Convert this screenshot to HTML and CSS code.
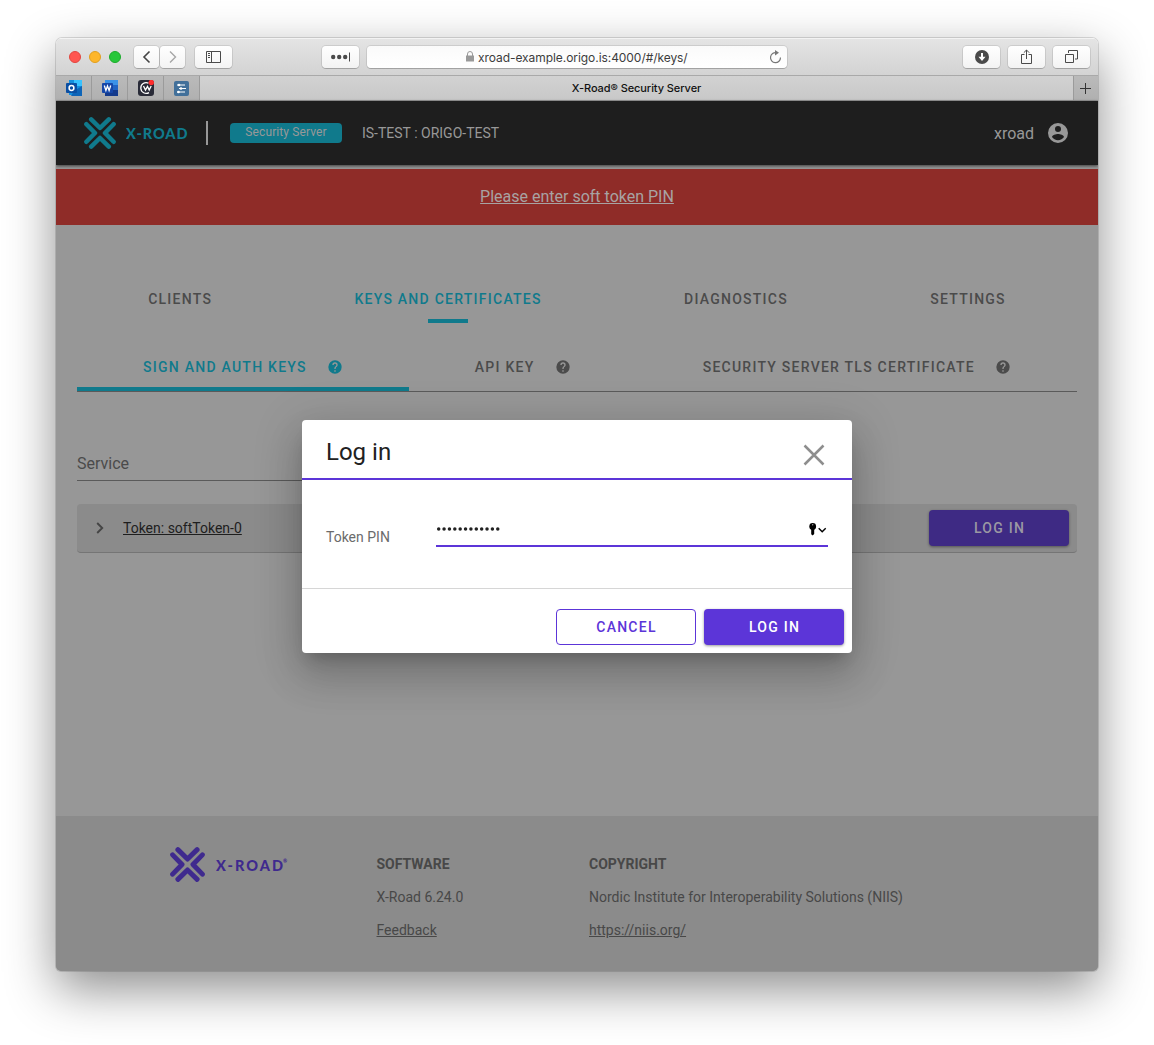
FILE: index.html
```html
<!DOCTYPE html>
<html lang="en">
<head>
<meta charset="utf-8">
<title>X-Road® Security Server</title>
<link rel="stylesheet" href="styles.css">
</head>
<body>
<svg class="defs" width="0" height="0">
  <symbol id="mark" viewBox="0 0 32 32"><path d="M7.2 2.4 16 11 24.8 2.4M7.2 29.6 16 21 24.8 29.6M2.4 7.2 11 16 2.4 24.8M29.6 7.2 21 16 29.6 24.8" fill="none" stroke="currentColor" stroke-width="4.5" stroke-linecap="round" stroke-linejoin="round"/></symbol>
  <symbol id="help" viewBox="0 0 24 24"><path fill="currentColor" d="M15.07,11.25L14.17,12.17C13.45,12.89 13,13.5 13,15H11V14.5C11,13.39 11.45,12.39 12.17,11.67L13.41,10.41C13.78,10.05 14,9.55 14,9C14,7.89 13.1,7 12,7A2,2 0 0,0 10,9H8A4,4 0 0,1 12,5A4,4 0 0,1 16,9C16,9.88 15.64,10.67 15.07,11.25M13,19H11V17H13M12,2A10,10 0 0,0 2,12A10,10 0 0,0 12,22A10,10 0 0,0 22,12C22,6.47 17.5,2 12,2Z"/></symbol>
</svg>
<div class="window">
  <div class="toolbar">
    <div class="lights"><i class="red"></i><i class="amber"></i><i class="green"></i></div>
    <div class="history">
      <span class="tool"><svg width="25" height="22" viewBox="0 0 25 22"><path d="M15.5 5.5 10 11l5.500 5.500" fill="none" stroke="#444" stroke-width="1.6"/></svg></span>
      <span class="tool"><svg width="25" height="22" viewBox="0 0 25 22"><path d="M10 5.500 15.500 11 10 16.500" fill="none" stroke="#a6a6a6" stroke-width="1.400"/></svg></span>
    </div>
    <span class="tool wide sidebar"><svg width="15" height="12" viewBox="0 0 15 12" fill="none" stroke="#4a4a4a"><path d="M.5.5h14v11H.5zM5.500.5v11M2 2.500h2M2 4.500h2M2 6.500h2"/></svg></span>
    <span class="tool wide more"><svg width="19" height="10" viewBox="0 0 19 10" fill="#4a4a4a"><circle cx="2.200" cy="5" r="2.200"/><circle cx="8.200" cy="5" r="2.200"/><circle cx="14.200" cy="5" r="2.200"/><path d="M18 .5h1v9h-1z"/></svg></span>
    <div class="address">
      <svg width="8" height="11" viewBox="0 0 8 11"><path d="M0 4.500h8V10.500H0z" fill="#999"/><path d="M1.500 5V3a2.500 2.500 0 0 1 5 0v2" fill="none" stroke="#999"/></svg>
      <span class="url">xroad-example.origo.is:4000/#/keys/</span>
      <svg class="reload" width="13" height="14" viewBox="0 0 13 14"><path d="M7.500 2.700A5 5 0 1 0 11.500 7.500" fill="none" stroke="#777" stroke-width="1.200"/><path d="M6 0l4 2.800L6 5.600z" fill="#777"/></svg>
    </div>
    <div class="actions">
      <span class="tool wide"><svg width="14" height="14" viewBox="0 0 14 14"><circle cx="7" cy="7" r="7" fill="#4a4a4a"/><path d="M7 3v5" stroke="#fff" stroke-width="2"/><path d="M3.500 6.800h7L7 11z" fill="#fff"/></svg></span>
      <span class="tool wide"><svg width="13" height="16" viewBox="0 0 13 16"><path d="M4.500 5.500h-3v9h10v-9h-3M6.500 10V1M3.800 3.700 6.500 1l2.700 2.700" fill="none" stroke="#4a4a4a"/></svg></span>
      <span class="tool wide"><svg width="13" height="13" viewBox="0 0 13 13"><path d="M.5 4.500h8v8h-8zM3.500 3v-2.500h9v8.500H10" fill="none" stroke="#4a4a4a"/></svg></span>
    </div>
  </div>
  <div class="tabbar">
    <span class="pin"><svg width="16" height="16" viewBox="0 0 16 16"><path d="M3 0h13v15H3z" fill="#1490df"/><path d="M8 0h8v6H8z" fill="#37c2ff"/><path d="M8 11l8-5v10H5z" fill="#0e65b8"/><rect y="3" width="11" height="10" rx="1" fill="#0a4fa3"/><circle cx="5.500" cy="8" r="2.400" fill="none" stroke="#fff" stroke-width="1.500"/></svg></span>
    <span class="pin"><svg width="16" height="16" viewBox="0 0 16 16"><path d="M3 0h13v6H3z" fill="#3a92e8"/><path d="M3 5h13v6H3z" fill="#2063c4"/><path d="M3 10h13v6H3z" fill="#143a8c"/><rect y="3" width="11" height="10" rx="1" fill="#1647a8"/><path d="M2.300 5.500 3.900 10.500 5.500 6l1.600 4.500L8.700 5.500" fill="none" stroke="#fff" stroke-width="1.300"/></svg></span>
    <span class="pin"><svg width="16" height="16" viewBox="0 0 16 16"><rect width="16" height="16" rx="3" fill="#292b38"/><path d="M10.500 3.100A5.400 5.400 0 1 0 11 12.600M5.500 6l2 4L9.500 6.500l1.700 3.500L13.200 6" fill="none" stroke="#fff" stroke-width="1.300"/><circle cx="13.300" cy="2.500" r="2.700" fill="#ff2d2d"/></svg></span>
    <span class="pin"><svg width="15" height="15" viewBox="0 0 15 15"><rect width="15" height="15" rx="2" fill="#42709a"/><path d="M3 4h8M5 7.500h7M3 11h8" stroke="#fff"/><circle cx="5" cy="4" r="1.300" fill="#fff"/><circle cx="7" cy="7.500" r="1.300" fill="#fff"/><circle cx="4.500" cy="11" r="1.300" fill="#fff"/></svg></span>
    <span class="tab-title">X-Road® Security Server</span>
    <span class="new-tab"><svg width="11" height="11" viewBox="0 0 11 11"><path d="M5.500 0v11M0 5.500h11" stroke="#333"/></svg></span>
  </div>
  <div class="page">
    <header class="header">
      <svg class="mark" width="32" height="32"><use href="#mark"/></svg>
      <svg class="wordmark" width="64" height="20"><text x="0" y="15.500" textLength="61.500" lengthAdjust="spacing">X-ROAD</text></svg>
      <span class="bar"></span>
      <span class="chip">Security Server</span>
      <span class="instance">IS-TEST : ORIGO-TEST</span>
      <span class="user">xroad</span>
      <svg width="24" height="24" viewBox="0 0 24 24"><path fill="currentColor" d="M12,2A10,10 0 0,0 2,12A10,10 0 0,0 12,22A10,10 0 0,0 22,12A10,10 0 0,0 12,2M12,19.200C9.500,19.200 7.290,17.920 6,16C6.030,14 10,12.900 12,12.900C14,12.900 17.970,14 18,16C16.710,17.920 14.500,19.200 12,19.200M12,5A3,3 0 0,1 15,8A3,3 0 0,1 12,11A3,3 0 0,1 9,8A3,3 0 0,1 12,5Z"/></svg>
    </header>
    <div class="alert"><a>Please enter soft token PIN</a></div>
    <main class="content">
      <nav class="tabs">
        <span class="tab">Clients</span><span class="tab active">Keys and certificates</span><span class="tab">Diagnostics</span><span class="tab">Settings</span>
      </nav>
      <nav class="subtabs">
        <span class="subtab active">Sign and auth keys<svg width="16" height="16"><use href="#help"/></svg></span>
        <span class="subtab">API key<svg width="16" height="16"><use href="#help"/></svg></span>
        <span class="subtab">Security Server TLS certificate<svg width="16" height="16"><use href="#help"/></svg></span>
      </nav>
      <div class="search">Service</div>
      <div class="token">
        <svg width="8" height="12" viewBox="0 0 8 12"><path d="M1.200 1l5 5-5 5" fill="none" stroke="#454545" stroke-width="1.900"/></svg>
        <a>Token: softToken-0</a>
        <button class="btn dim">Log in</button>
      </div>
    </main>
    <footer class="footer">
      <div class="brand">
        <svg width="35" height="35"><use href="#mark"/></svg>
        <svg class="wordmark" width="74" height="20"><text x="0" y="15.500" textLength="67" lengthAdjust="spacing">X-ROAD</text><text class="reg" x="67" y="8">®</text></svg>
      </div>
      <div class="col software"><b>SOFTWARE</b><span>X-Road 6.24.0</span><a>Feedback</a></div>
      <div class="col"><b>COPYRIGHT</b><span>Nordic Institute for Interoperability Solutions (NIIS)</span><a>https://niis.org/</a></div>
    </footer>
    <section class="dialog">
      <div class="dialog-head">
        <h1>Log in</h1>
        <svg width="22" height="22" viewBox="0 0 22 22"><path d="M1.500 1.500l19 19M20.500 1.500l-19 19" stroke="#8e8e8e" stroke-width="2.500"/></svg>
      </div>
      <div class="dialog-body">
        <label>Token PIN</label>
        <div class="field">
          <svg width="64" height="6" viewBox="0 0 64 6"><path d="M2.700 3H63" stroke="#212121" stroke-width="3.500" stroke-linecap="round" stroke-dasharray="0 5.370"/></svg>
          <svg width="20" height="13" viewBox="0 0 20 13"><circle cx="4.700" cy="3.500" r="3.400"/><circle cx="4.700" cy="1.700" r=".7" fill="#aaa"/><path d="M3.200 6h3v5l-1.500 1.500-1.500-1.200z"/><path d="M10.700 5.200l3.500 3.500 3.500-3.500" fill="none" stroke="#000" stroke-width="1.400"/></svg>
        </div>
      </div>
      <div class="dialog-foot"><button class="btn outline">Cancel</button><button class="btn">Log in</button></div>
    </section>
  </div>
</div>
</body>
</html>
```
FILE: styles.css
```css
* { box-sizing: border-box; }
body { margin: 0; padding: 38px 56px; min-height: 1045px; background: #fff; font-family: Roboto, sans-serif; font-size: 14px; }
svg { display: block; flex: none; }
a { text-decoration: underline; }
.defs { position: absolute; }

.window { width: 1042px; height: 933px; border-radius: 6px 6px 5px 5px; overflow: hidden; box-shadow: 0 0 0 1px rgba(0,0,0,.13), 0 18px 50px rgba(0,0,0,.45); }
.toolbar { height: 37px; padding: 0 8px 1px 13px; display: flex; align-items: center; background: linear-gradient(#e4e4e4, #d3d3d3); border-top: 1px solid #f3f3f3; }
.lights { display: flex; gap: 8px; margin-right: 13px; }
.lights i { width: 12px; height: 12px; border-radius: 50%; border: 1px solid #e2463f; background: #ff5650; }
.lights .amber { background: #fdb62b; border-color: #e19f1f; }
.lights .green { background: #27c73b; border-color: #1cab2b; }
.tool { height: 22px; display: flex; align-items: center; justify-content: center; background: linear-gradient(#fff, #f3f3f3); border-radius: 4px; box-shadow: 0 0 0 1px rgba(0,0,0,.09), 0 1px 0 rgba(0,0,0,.16); }
.wide { width: 37px; }
.history { display: flex; gap: 1px; }
.sidebar { margin-left: 10px; }
.more { margin-left: 90px; }
.address { width: 420px; height: 22px; margin-left: 8px; padding: 0 5px 0 99px; display: flex; align-items: center; background: linear-gradient(#fafafa, #fff); border-radius: 4px; box-shadow: 0 0 0 1px rgba(0,0,0,.09), 0 1px 0 rgba(0,0,0,.16); font: 12px Inter, sans-serif; letter-spacing: -.06px; color: #3c3c3c; }
.url { margin: 1px 0 0 4px; white-space: nowrap; }
.reload { margin-left: auto; }
.actions { display: flex; gap: 8px; margin-left: auto; }
.tabbar { height: 26px; display: flex; border-top: 1px solid #a9a9a9; border-bottom: 1px solid #999; }
.pin, .new-tab { width: 36px; display: flex; align-items: center; justify-content: center; background: linear-gradient(#bababa, #b0b0b0); border-right: 1px solid #9b9b9b; }
.new-tab { width: 25px; border-right: 0; border-left: 1px solid #9b9b9b; padding-right: 1px; }
.tab-title { flex: 1; display: flex; align-items: center; justify-content: center; background: linear-gradient(#d2d2d2, #c8c8c8); font: 500 11px Inter, sans-serif; letter-spacing: -.08px; color: #111; }

.page { position: relative; height: 870px; background: #979797; display: flex; flex-direction: column; }
.header { height: 64px; flex: none; padding: 0 28px; display: flex; align-items: center; background: #1e1e1e; color: #989898; box-shadow: 0 1px 3px rgba(0,0,0,.6); }
.mark, .header .wordmark { color: #107a8c; }
.wordmark { fill: currentColor; font: 900 14.500px Lato, sans-serif; }
.header .wordmark { margin-left: 10px; }
.bar { width: 2px; height: 24px; margin-left: 16px; background: #989898; }
.chip { width: 112px; height: 20px; margin-left: 22px; border-radius: 4px; background: #107a8c; font-size: 12px; line-height: 18px; text-align: center; letter-spacing: .1px; }
.instance { margin-left: 20px; }
.user { margin: 0 12px 0 auto; font-size: 16px; }
.alert { height: 56px; flex: none; margin-top: 4px; padding-bottom: 2px; display: flex; align-items: center; justify-content: center; background: #8f2c28; color: #a8a3a3; font-size: 16px; }
.content { flex: 1; padding: 48px 21px 0; }
.tabs { height: 50px; display: flex; justify-content: space-around; font-weight: 500; letter-spacing: 1.25px; text-transform: uppercase; color: #4b4b4b; }
.tab { line-height: 52px; display: flex; flex-direction: column; align-items: center; }
.active { color: #107a8c; }
.tab.active::after { content: ""; width: 40px; height: 4px; margin-top: -6px; background: #107a8c; }
.subtabs { height: 49px; margin-top: 20px; display: flex; border-bottom: 1px solid #5a5a5a; font-weight: 500; letter-spacing: 1.25px; text-transform: uppercase; color: #4b4b4b; }
.subtab { flex: 1 1 auto; display: flex; align-items: center; justify-content: center; gap: 20px; }
.subtab.active { border-bottom: 4px solid #107a8c; padding-top: 4px; }
.search { height: 30px; margin-top: 59px; border-bottom: 1px solid #5a5a5a; width: 260px; font-size: 16px; line-height: 25px; color: #4b4b4b; }
.token { height: 49px; margin-top: 23px; padding: 0 8px 0 19px; display: flex; align-items: center; border-radius: 4px; border-bottom: 1px solid #757575; background: #8b8b8b; color: #1e1e1e; }
.token a { margin-left: 19px; }
.btn { width: 140px; height: 36px; padding: 0 0 0 1px; border: 0; border-radius: 4px; background: #5c35d8; color: #fff; font: 500 14px Roboto, sans-serif; letter-spacing: 1.25px; text-transform: uppercase; box-shadow: 0 1px 3px rgba(0,0,0,.4); }
.dim { margin-left: auto; background: #3e2a84; color: #9b98a3; }
.outline { background: #fff; border: 1px solid #5c35d8; color: #5c35d8; box-shadow: none; }
.footer { height: 155px; flex: none; display: flex; background: #8b8b8b; color: #484848; padding: 31px 0 0 114px; }
.brand { width: 206.500px; display: flex; align-items: center; height: 35px; color: #3f2a8e; }
.brand .wordmark { margin-left: 11px; }
.wordmark .reg { font-size: 5px; }
.col { display: flex; flex-direction: column; gap: 17px; line-height: 16px; padding-top: 9px; }
.software { width: 212.500px; }
.col b { font-weight: 700; }

.dialog { position: absolute; left: 246px; top: 319px; width: 550px; height: 233px; border-radius: 4px; overflow: hidden; background: #fff; box-shadow: 0 11px 15px -7px rgba(0,0,0,.2), 0 24px 38px 3px rgba(0,0,0,.14), 0 9px 46px 8px rgba(0,0,0,.12); }
.dialog-head { height: 60px; padding: 4px 27px 0 24px; display: flex; justify-content: space-between; align-items: center; border-bottom: 2px solid #5c35d8; }
.dialog-head svg { margin-top: 8px; }
h1 { margin: 2px 0 0; font-size: 24px; line-height: 32px; font-weight: 400; color: #212121; }
.dialog-body { height: 109px; padding: 38px 24px 0; display: flex; border-bottom: 1px solid #d6d6d6; }
label { width: 110px; line-height: 38px; color: #6b6b6b; }
.field { flex: 1; height: 29px; padding-top: 0; display: flex; align-items: center; justify-content: space-between; border-bottom: 2px solid #5c35d8; padding-bottom: 5px; }
.dialog-foot { display: flex; justify-content: flex-end; gap: 8px; padding: 20px 8px 8px; }
```
